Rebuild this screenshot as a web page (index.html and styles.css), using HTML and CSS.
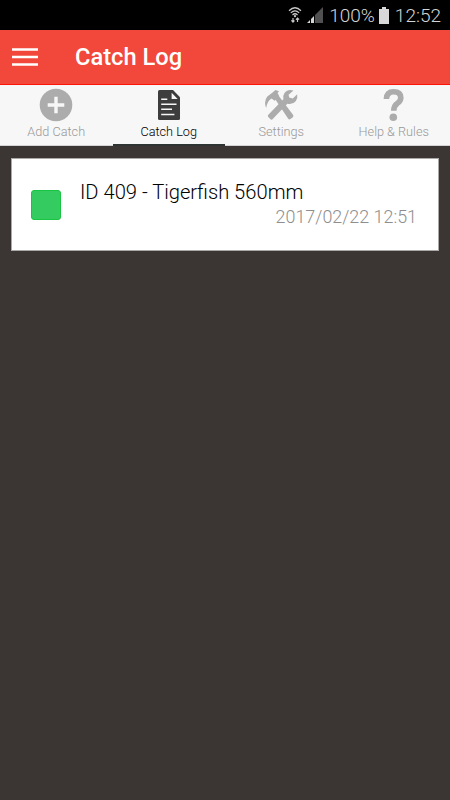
FILE: index.html
```html
<!DOCTYPE html>
<html lang="en">
<head>
    <meta charset="UTF-8">
    <meta name="viewport" content="width=device-width, initial-scale=1.0">
    <title>Catch Log</title>
    <link rel="stylesheet" href="styles.css">
</head>
<body>
    <div class="status-bar">
        <svg class="wifi" width="14" height="18" viewBox="0 0 14 18" fill="none" stroke="#c8c8c8" stroke-width="1.2">
            <path d="M1 4.7Q7 -1.2 13 4.7M2.8 6.9Q7 2.8 11.2 6.9M4.5 9Q7 6.5 9.5 9"/>
            <circle cx="7" cy="10.2" r="1.1" fill="#c8c8c8" stroke="none"/>
            <path d="M5 12v4M3.4 14.3L5 16l1.4-1.5M9.5 16v-4M8 13.6L9.5 12l1.6 1.6"/>
        </svg>
        <svg class="signal" width="16" height="16" viewBox="0 0 16 16">
            <path d="M8 8L16 0V16H8Z" fill="#505050"/>
            <path d="M0 16L3 13V16ZM4 16V12L7 9V16Z" fill="#d5d5d5"/>
        </svg>
        <span class="percent">100%</span>
        <svg class="battery" width="10" height="17" viewBox="0 0 10 17">
            <path d="M3 0H7V2H10V17H0V2H3Z" fill="#d8d8d8"/>
        </svg>
        <span class="time">12:52</span>
    </div>

    <div class="header">
        <svg class="menu" width="26" height="20" viewBox="0 0 26 20">
            <path d="M0 2.5H26M0 10H26M0 17.5H26" stroke="white" stroke-width="2.4"/>
        </svg>
        <h1>Catch Log</h1>
    </div>

    <div class="tabs">
        <div class="tab">
            <svg width="34" height="34" viewBox="0 0 34 34">
                <circle cx="17" cy="17" r="16.3" fill="#acacac"/>
                <path d="M17 8.7V25.3M8.7 17H25.3" stroke="#f7f7f7" stroke-width="3.4"/>
            </svg>
            <span>Add Catch</span>
        </div>
        <div class="tab active">
            <svg width="34" height="34" viewBox="0 0 34 34">
                <path d="M7.5 2H21L28 9.2V30.5Q28 32 26.5 32H7.5Q6 32 6 30.5V3.5Q6 2 7.5 2Z" fill="#3d3d3d"/>
                <path d="M19.6 4.8L25.7 11H19.6Z" fill="#f7f7f7"/>
                <path d="M9.2 11.2H15.3M9.2 16.3H24.5M9.2 21.3H20M9.2 26.4H22.4" stroke="#f7f7f7" stroke-width="1.5"/>
            </svg>
            <span>Catch Log</span>
        </div>
        <div class="tab">
            <svg width="34" height="34" viewBox="0 0 34 34">
                <path d="M8.6 4.5L11.4 2L15 3.2L13.6 5.1L15.2 8.2L10.5 12.7L7.7 10.4Q3.6 12.1 2.1 20.1Q-.5 13.1 3.3 8.5Z" fill="#acacac"/>
                <path d="M10.7 10.4L14.4 7.4L29 26.8Q30 28.2 28.7 29.3L26.5 31.1Q25.2 32 24.2 30.7Z" fill="#acacac"/>
                <path d="M29.5 2.4Q23.5.7 20.5 5Q18.5 8 19.4 11.2L4.1 27Q3.4 28 4.3 29L6.5 31.3Q7.5 32.2 8.5 31.2L23.3 15.7Q28.4 17.1 31.7 13.2Q34 10.3 33.2 6.2L28.8 10.5L25.2 9.5L24.6 6.7Z" fill="#acacac"/>
            </svg>
            <span>Settings</span>
        </div>
        <div class="tab">
            <svg width="34" height="34" viewBox="0 0 34 34">
                <path d="M9.4 11Q9.7 3.7 16.6 3.7Q23.8 3.8 23.8 9.8Q23.8 13 20.4 15.3Q16.8 17.6 16.8 22.8" fill="none" stroke="#acacac" stroke-width="5.6"/>
                <circle cx="16.3" cy="29.3" r="3.8" fill="#acacac"/>
            </svg>
            <span>Help &amp; Rules</span>
        </div>
    </div>

    <div class="log-list">
        <div class="log-item">
            <div class="marker"></div>
            <div class="details">
                <h2>ID 409 - Tigerfish 560mm</h2>
                <p>2017/02/22 12:51</p>
            </div>
        </div>
    </div>
</body>
</html>
```
FILE: styles.css
```css
* {
    box-sizing: border-box;
}

body {
    font-family: Roboto, Arial, sans-serif;
    margin: 0;
    padding: 0;
    background-color: #3b3534;
}

.status-bar {
    display: flex;
    align-items: center;
    justify-content: flex-end;
    height: 30px;
    padding-right: 9px;
    background: #000;
    color: #d4d4d4;
    font-size: 19px;
    font-weight: 300;
    line-height: 30px;
}

.signal {
    margin: 0 6px 0 5px;
}

.battery {
    margin: 0 6px 0 4px;
}

.percent,
.time {
    padding-top: 2px;
}

.header {
    display: flex;
    align-items: center;
    height: 55px;
    padding-left: 12px;
    background-color: #f1483b;
    border-bottom: 1px solid #fc1408;
    color: white;
}

.menu {
    margin: 0 37px 0 0;
}

.header h1 {
    margin: 0;
    font-size: 23.7px;
    font-weight: 500;
}

.tabs {
    display: flex;
    height: 61px;
    background: #f7f7f7;
}

.tab {
    flex: 1;
    display: flex;
    flex-direction: column;
    align-items: center;
    padding-top: 3px;
    border-bottom: 1px solid #d2d3d2;
    color: #999;
    font-size: 12.7px;
    font-weight: 300;
    line-height: 20px;
}

.tab.active {
    border-bottom: 2px solid #2e3431;
    color: #000;
}

.log-list {
    padding: 12px 11px;
}

.log-item {
    display: flex;
    height: 93px;
    padding: 21px 21px 0 19px;
    background: white;
    border: 1px solid #aaa9a8;
}

.marker {
    width: 30px;
    height: 30px;
    margin: 10px 19px 0 0;
    background: #34cb61;
    border: 1px solid #18c541;
    border-radius: 3px;
}

.details {
    flex: 1;
}

.details h2 {
    margin: 0;
    color: #000;
    font-size: 20.15px;
    font-weight: 300;
    line-height: 25px;
}

.details p {
    margin: 0;
    color: #8e8e8e;
    font-size: 17.9px;
    font-weight: 300;
    line-height: 24px;
    text-align: right;
}
```
